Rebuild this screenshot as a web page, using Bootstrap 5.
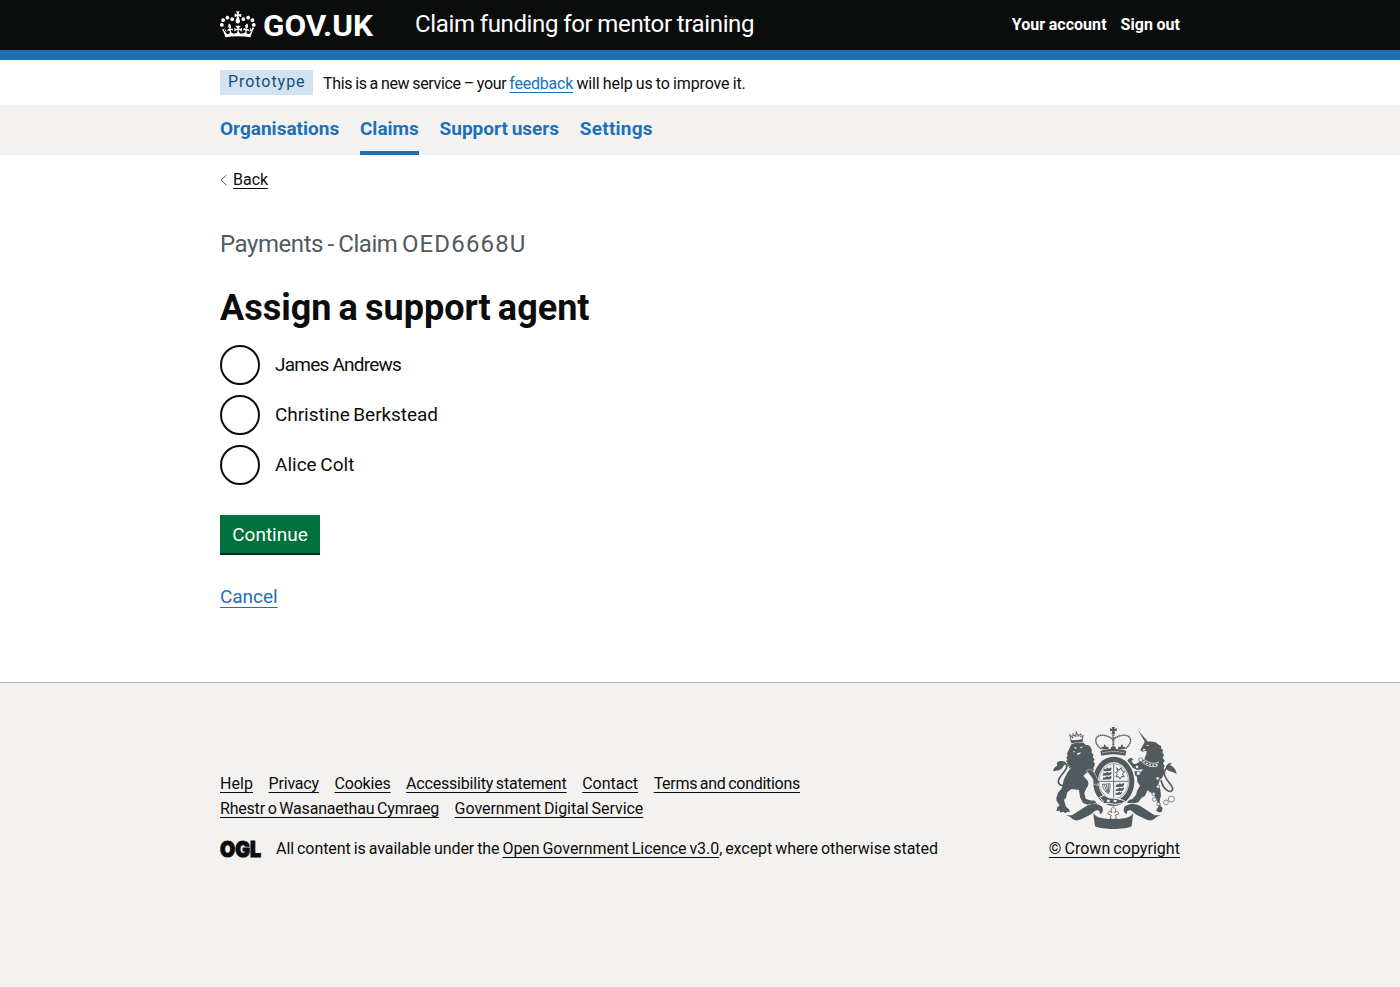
<!DOCTYPE html>
<html lang="en">
<head>
<meta charset="utf-8">
<meta name="viewport" content="width=device-width, initial-scale=1">
<title>Assign a support agent - Claim funding for mentor training</title>
<link href="https://cdn.jsdelivr.net/npm/bootstrap@5.3.0/dist/css/bootstrap.min.css" rel="stylesheet">
<style>
:root{--ink:#0b0c0c;--blue:#1d70b8;--pale:#f3f2f1}
body{font-family:Roboto,"Liberation Sans",sans-serif;font-size:16px;line-height:20px;color:var(--ink);background:var(--pale);word-spacing:-1px}
.page-width{width:960px;margin:0 auto}
a{color:var(--ink);text-decoration:underline;text-decoration-thickness:1px;text-underline-offset:3px;text-decoration-skip-ink:none}
a:hover{text-decoration-thickness:3px}
a.blue-link{color:var(--blue)}
.site-header{background:var(--ink);color:#fff;border-bottom:10px solid var(--blue);height:60px}
.site-header a{color:#fff;text-decoration:none}
.brand-mark{width:195px}
.service-name{font-size:24px;line-height:30px;word-spacing:-.5px;letter-spacing:-.36px;padding-top:9px}
.header-links{gap:14px;padding-top:15px;letter-spacing:.05px;word-spacing:-.6px}
.phase{height:45px;padding-top:10px}
.phase-tag{background:#d2e2f1;color:#144e81;letter-spacing:.95px;height:25px;width:93px;padding:2px 0 0 8px;margin-right:10px}
.phase-text{letter-spacing:-.35px;word-spacing:-.6px;padding-top:4px}
.phase-text a{letter-spacing:-.2px}
.phase-text .after{letter-spacing:-.13px}
.service-nav{background:var(--pale);height:50px;font-size:19px;line-height:25px;font-weight:700;letter-spacing:.01px}
.service-nav a{color:var(--blue);text-decoration:none;height:50px;padding-top:11px;margin-right:20.7px}
.service-nav a.current{border-bottom:4px solid var(--blue)}
.main-area{background:#fff;height:527px}
.back-row{padding-top:15px;height:60px}
.caption{font-size:24px;line-height:30px;color:#505a5f;word-spacing:-1px;letter-spacing:-.44px;margin:14px 0 29px}
.caption .claim-ref{letter-spacing:1.15px}
h1.title{font-size:36px;line-height:40px;font-weight:700;word-spacing:-1.8px;margin:0 0 17px}
.choice{height:40px;margin-bottom:10px;font-size:19px;line-height:25px}
.choice label{margin-top:-2px}
.choice .form-check-input{width:40px;height:40px;margin:0 15px 0 0;border:2px solid var(--ink);flex:none}
.btn-go{background:#00703c;color:#fff;border-radius:0;border:0;box-shadow:0 2px 0 #002d18;font-size:19px;line-height:19px;width:100px;height:38px;padding:1px 0 0;margin-top:30px}
.btn-go:hover{background:#005a30;color:#fff}
.cancel-row{font-size:19px;line-height:25px;margin-top:31px}
.cancel-row a{text-underline-offset:4px}
.site-footer{border-top:1px solid #b1b4b6;padding-top:42px}
.foot-links{line-height:25px;width:640px;column-gap:15.6px}
.licence{padding-top:15px;line-height:25px}
.crown-link{line-height:25px;letter-spacing:.04px}
.wide-gap{letter-spacing:.25px}
.wide-gap-s{letter-spacing:.06px}
.tight-1{letter-spacing:-.05px}
.tight-2{letter-spacing:-.2px}
.tight-3{letter-spacing:-.29px}
.tight-4{letter-spacing:-.78px;word-spacing:0}
</style>
</head>
<body>
<header class="site-header">
  <div class="page-width d-flex align-items-start">
    <a class="brand-mark" href="#" aria-label="GOV.UK">
      <svg class="d-block" width="160" height="50" viewBox="0 0 160 50" fill="#fff">
        <path transform="translate(0 7.2)" d="M6.7 12.2c1 .4 2.1-.1 2.5-1s-.1-2.1-1-2.5c-1-.4-2.1.1-2.5 1-.4 1 0 2.1 1 2.5m-4.3 2.5c1 .4 2.1-.1 2.5-1s-.1-2.1-1-2.5c-1-.4-2.1.1-2.5 1-.5 1 0 2.1 1 2.5m-1.3 4.8c1 .4 2.1-.1 2.5-1 .4-1-.1-2.1-1-2.5-1-.4-2.1.1-2.5 1-.4 1 0 2.1 1 2.5m10.4-5.8c1 .4 2.1-.1 2.5-1s-.1-2.1-1-2.5c-1-.4-2.1.1-2.5 1s0 2.1 1 2.5m17.4-1.5c-1 .4-2.1-.1-2.5-1s.1-2.1 1-2.5c1-.4 2.1.1 2.5 1 .5 1 0 2.1-1 2.5m4.3 2.5c-1 .4-2.1-.1-2.5-1s.1-2.1 1-2.5c1-.4 2.1.1 2.5 1 .5 1 0 2.1-1 2.5m1.3 4.8c-1 .4-2.1-.1-2.5-1-.4-1 .1-2.1 1-2.5 1-.4 2.1.1 2.5 1 .4 1 0 2.1-1 2.5m-10.4-5.8c-1 .4-2.1-.1-2.5-1s.1-2.1 1-2.5c1-.4 2.1.1 2.5 1s0 2.1-1 2.5m-5.3-4.9 2.4 1.3V6.5l-2.4.8c-.1-.1-.1-.2-.2-.2s1-3 1-3h-3.4l1 3c-.1.1-.2.1-.2.2-.1.1-2.4-.7-2.4-.7v3.5L17 8.8c-.1.1 0 .2.1.3l-1.4 4.2c-.1.2-.1.4-.1.7 0 1.1.8 2.1 1.9 2.2h.6C19.2 16 20 15.1 20 14c0-.2 0-.4-.1-.7l-1.4-4.2c.2-.1.3-.2.3-.3m-1 20.3c4.6 0 8.9.3 12.8.9 1.1-4.6 2.4-7.2 3.8-9.1l-2.6-.9c.3 1.3.3 1.9 0 2.8-.4-.4-.8-1.2-1.1-2.4l-1.2 4.2c.8-.5 1.4-.9 2-.9-1.2 2.6-2.7 3.2-3.6 3-1.2-.2-1.7-1.3-1.5-2.2.3-1.3 1.6-1.6 2.2-.1 1.2-2.4-.8-3.1-2.1-2.4 1.9-1.9 2.2-3.6.6-5.7-2.2 1.7-2.2 3.3-1.2 5.6-1.3-1.5-3.3-.7-2.5 1.7.9-1.4 2.2-.5 2 .8-.2 1.2-1.7 2.1-3.7 2-2.8-.2-3-2.2-3-3.7.7-.1 1.9.5 3 2l.4-4.4c-1.1 1.2-2.2 1.4-3.3 1.4.4-1.2 2.1-3.1 2.1-3.1h-5.5s1.8 2 2.1 3.1c-1.1 0-2.2-.2-3.3-1.4l.4 4.4c1.1-1.5 2.2-2.1 3-2-.1 1.6-.2 3.5-3 3.7-1.9.2-3.5-.8-3.7-2-.2-1.3 1.1-2.2 2-.8.7-2.3-1.2-3.1-2.5-1.7 1-2.3 1-3.9-1.2-5.6-1.6 2.1-1.3 3.8.6 5.7-1.3-.7-3.2 0-2.1 2.4.6-1.5 1.9-1.2 2.2.1.2.9-.4 1.9-1.5 2.2-1 .2-2.4-.4-3.6-3 .7 0 1.3.3 2 .9L5.4 22c-.3 1.1-.7 1.9-1.1 2.4-.3-.8-.2-1.5 0-2.8l-2.6.9C3 22.9 4.2 25.4 5.3 30c3.8-.6 8-.9 12.5-.9"/>
        <text x="43" y="36" font-size="29.4" font-weight="700" font-family="Roboto" textLength="110" lengthAdjust="spacingAndGlyphs">GOV.UK</text>
      </svg>
    </a>
    <a class="service-name" href="#">Claim funding for mentor training</a>
    <nav class="ms-auto d-flex fw-bold header-links"><a href="#">Your account</a><a href="#">Sign out</a></nav>
  </div>
</header>
<div class="bg-white">
  <div class="page-width phase d-flex">
    <strong class="phase-tag fw-normal">Prototype</strong>
    <span class="phase-text">This is a new service – your <a class="blue-link" href="#">feedback</a><span class="after"> will help us to improve it.</span></span>
  </div>
</div>
<div class="service-nav">
  <nav class="page-width d-flex">
    <a href="#">Organisations</a>
    <a class="current" href="#">Claims</a>
    <a href="#">Support users</a>
    <a class="wide-gap" href="#">Settings</a>
  </nav>
</div>
<div class="main-area">
  <div class="page-width">
    <div class="back-row d-flex align-items-start">
      <svg width="13" height="20" viewBox="0 0 13 20" fill="none" stroke="#505a5f"><path d="M6.3 5.2 1 10.2l5.3 5"/></svg>
      <a href="#">Back</a>
    </div>
    <main>
      <p class="caption">Payments - Claim <span class="claim-ref">OED6668U</span></p>
      <h1 class="title">Assign a support agent</h1>
      <form>
        <div class="choice d-flex align-items-center"><input class="form-check-input" type="radio" name="agent" id="a1"><label class="tight-4" for="a1">James Andrews</label></div>
        <div class="choice d-flex align-items-center"><input class="form-check-input" type="radio" name="agent" id="a2"><label class="tight-1" for="a2">Christine Berkstead</label></div>
        <div class="choice d-flex align-items-center"><input class="form-check-input" type="radio" name="agent" id="a3"><label for="a3">Alice Colt</label></div>
        <button type="button" class="btn btn-go d-block">Continue</button>
        <p class="cancel-row mb-0"><a class="blue-link tight-1" href="#">Cancel</a></p>
      </form>
    </main>
  </div>
</div>
<footer class="site-footer">
  <div class="page-width d-flex justify-content-between align-items-end">
    <div>
      <div class="foot-links d-flex flex-wrap">
        <a class="wide-gap-s" href="#">Help</a><a class="tight-2" href="#">Privacy</a><a class="tight-2" href="#">Cookies</a><a class="tight-2" href="#">Accessibility statement</a><a href="#">Contact</a><a class="tight-3" href="#">Terms and conditions</a><a class="tight-2" href="#">Rhestr o Wasanaethau Cymraeg</a><a class="tight-1" href="#">Government Digital Service</a>
      </div>
      <div class="licence d-flex">
        <svg width="56" height="25" viewBox="0 0 56 25" fill="#0b0c0c" stroke="#0b0c0c" stroke-width="1"><text x="0" y="21.4" font-family="Inter" font-weight="900" font-size="21.4" textLength="41" lengthAdjust="spacingAndGlyphs">OGL</text></svg>
        <span class="tight-1">All content is available under the <a href="#">Open Government Licence v3.0</a>, except where otherwise stated</span>
      </div>
    </div>
    <div class="text-end">
      <svg class="d-block ms-auto" width="132" height="111" viewBox="24 15 396 333" fill="#505a5f" stroke="none">
        <!-- lion supporter -->
        <g>
          <path d="M93 62 90 46l8 7 1-11 8 7 2-12 6 11 8-7 0 9 6-2-3 14z" fill="none" stroke="#505a5f" stroke-width="3.5" stroke-dasharray="5 1"/>
          <path d="m92 62 35-4 2 7-35 5z"/>
          <path d="M94 73c10-5 25-7 37-5l5 6 10 2 6 6 4 9-2 6 7 8-3 5 6 9-4 5 5 8-3 9-4 4c10 5 17 14 19 24l9 15-5 8-8-2-6-15-22-22c-5 8-13 10-15 15l12 13c6 8 3 18-3 24l-6 14 4 17 12 5 16 1 6 10-8-2-6 4-7-3-6 3-15-5-9-17-3-22-23-3-12 10-4 16-6 7 6 20 9 8 3 9-8-2-6 5-6-5-9 3-2-6-10 1 3-11 7-6-9-12-1-10 5-16 12-14 5-24 11-22 12-16-8 4 3-8-8 3 4-8-7 1 5-8-5-1 4-8-3-3 4-8-2-5z"/>
          <path d="m101 81 10 2-4 4zm18 1 10-3-5 6zM111 100l12-3-3 5-7 3zM99 93l6 1-3 4z" fill="#f3f2f1"/>
          <path d="M84 193c-26 11-36-6-23-23 12-16 24-26 17-38-4-6-12-7-21-6" fill="none" stroke="#505a5f" stroke-width="5"/>
          <path d="M77 131c-6-8-17-9-26-4 1 4-2 7 1 10-8 3-12 10-13 17 14-3 26-3 32-17z"/>
        </g>
        <!-- unicorn supporter -->
        <g>
          <path d="m293 29 31 36-7 4z"/>
          <path d="m312 70 4-10 7 5c14-2 26 0 33 9l8 5-1 6 7 6-3 5 5 9-4 8 6 9-5 8 5 8-3 6c4 15 0 28-12 36l-4 14 6 15 2 18-4 14 3 18 6 5-3 12-10 1-7-7 8-10-5-18-8-17-21-14-7 17-10 5-10 14-12 3-19-1-8-5 10-5 10-1 12-13 4-14 8-14-8-12-1-15-12-7-8 9-6-3 8-13 16-3 14 3 6-8-18 2-12-6-12-10-6-10 5-8 8-3 6 6-6 3 6 9 8 1 12-8 13-7 6-15 1-10-14 3-5-6 6-10z"/>
          <path d="M304 110c15 18 36 25 53 16M301 121c17 17 35 23 53 16" stroke="#f3f2f1" stroke-width="2.5" fill="none"/>
          <path d="M303 116c17 18 35 24 53 15" stroke="#f3f2f1" stroke-width="4" stroke-dasharray="5 5" fill="none"/>
          <path d="m307 90 5-4 5 2-5 4zm11-13 6-3 3 4z" fill="#f3f2f1"/>
          <path d="M363 180c6 30 32 44 35 27 2-12-29-31-25-51 2-10 10-18 18-17" fill="none" stroke="#505a5f" stroke-width="5"/>
          <path d="M378 147c-2-11 6-18 18-19l-6 7c12 6 18 14 20 28-9-9-20-7-32-16z"/>
          <g fill="#f3f2f1" stroke="#505a5f" stroke-width="2"><circle cx="302" cy="119" r="6"/><circle cx="291" cy="141" r="5"/><circle cx="295" cy="160" r="6"/><circle cx="353" cy="175" r="5"/><circle cx="354" cy="200" r="5"/><circle cx="341" cy="222" r="5"/><circle cx="343" cy="238" r="6"/><circle cx="355" cy="252" r="5"/><circle cx="378" cy="247" r="7"/><circle cx="394" cy="237" r="9"/></g>
        </g>
        <!-- crown -->
        <g>
          <path d="M215 21h10l-2 6 7-2v9l-7-2 3 11h-12l3-11-7 2v-9l7 2z"/>
          <path d="M184 87c-20-14-22-34-6-40 14-4 30 2 41 12 11-10 28-16 42-12 16 6 14 26-6 40" fill="none" stroke="#505a5f" stroke-width="4.5" stroke-dasharray="4.5 1.2"/>
          <path d="M220 44v38" stroke="#505a5f" stroke-width="6" stroke-dasharray="5 1.5"/>
          <path d="m186 88-2-8 6 1 4-9 5 9 6-1 1 7 6 0 2-7h12l2 7 6 0 1-7 6 1 5-9 4 9 6-1-2 8z"/>
          <path d="M181 93c26-8 52-8 78 0l-3 14c-24-6-48-6-72 0z"/>
          <path d="M187 99c22-6 44-6 66 0" fill="none" stroke="#f3f2f1" stroke-width="1.8" stroke-dasharray="7 2"/>
        </g>
        <!-- garter and quartered shield -->
        <ellipse cx="221" cy="184" rx="67" ry="78" fill="#f3f2f1"/>
        <ellipse cx="221" cy="184" rx="62" ry="74"/>
        <ellipse cx="221" cy="184" rx="47" ry="57" fill="#f3f2f1"/>
        <ellipse cx="221" cy="184" rx="44" ry="53" fill="none" stroke="#505a5f" stroke-width="1.5"/>
        <path d="M221 131v104M177 184h88" stroke="#505a5f" stroke-width="2.5"/>
        <path d="m190 143 3 4 6-1 4-4 3 4 7-4 2 4-4 7-22 1 3-4zm-2 13 3 4 6-1 5-4 3 4 8-4 2 4-4 7-24 1 3-4zm0 13 3 4 6-1 5-4 3 4 8-4 2 4-4 6-24 1 3-4z"/>
        <path d="m226 190 3 4 6-1 5-4 3 4 8-4 2 4-4 7-23 1 3-4zm0 13 3 4 6-1 5-4 3 4 8-4 1 4-4 6-22 1 3-4zm0 12 3 4 5-1 4-4 3 4 6-4-1 5-5 5-15 1 2-4z"/>
        <path d="m230 143 7 8 6-8 3 9 8 4-7 6 6 9-8-2-5 8-4-7-8 1 4-8-5-6 7-2z" fill="none" stroke="#505a5f" stroke-width="3"/>
        <path d="M187 193c8 0 15-1 23-2 1 14-1 23-5 30-10-6-16-16-18-28zM193 194l8 22M199 193l5 25M205 193l1 25" fill="none" stroke="#505a5f" stroke-width="2.5"/>
        <path d="m178 232 15-6 15 8 20 1 22 6 6 4-12 6-20 2-18-3-18 1 2-8z" stroke="#f3f2f1" stroke-width="3"/>
        <path d="m203 238 8 4-4 5-8-3zm19 1 9 2-3 6-8-2z" fill="#f3f2f1"/>
        <!-- lion's forepaw resting on the garter -->
        <path d="m139 152 12-4c11 7 17 16 19 25l8 12 1 9-6-4-2 8-4-6-6 4 0-12-6-12z" stroke="#f3f2f1" stroke-width="1.5"/>
        <!-- ribbon -->
        <path d="M76 286h20l42-27c14-9 33-9 44-2 8 4 9 14 3 23l-6 2c2-8-4-13-12-10-6 3-10 7-16 12l-28 14c-9 5-19 4-26-1-6-6-12-10-21-11z"/>
        <path d="M364 286h-20l-42-27c-14-9-33-9-44-2-8 4-9 14-3 23l6 2c-2-8 4-13 12-10 6 3 10 7 16 12l28 14c9 5 19 4 26-1 6-6 12-10 21-11z"/>
        <path d="M159 276c4 14 20 21 61 21s57-7 60-21l-5 43c-12 6-31 8-55 8s-43-2-55-8z"/>
        <path d="M220 260c7 6 9 11 4 18 8-7 14-2 11 5l-9 3 4 9-10 4-10-4 4-9-9-3c-3-7 3-12 11-5-5-7-3-12 4-18z" fill="none" stroke="#505a5f" stroke-width="2.5"/>
      </svg>
      <a class="crown-link" href="#">© Crown copyright</a>
    </div>
  </div>
</footer>
<script src="https://cdn.jsdelivr.net/npm/bootstrap@5.3.0/dist/js/bootstrap.bundle.min.js"></script>
</body>
</html>
